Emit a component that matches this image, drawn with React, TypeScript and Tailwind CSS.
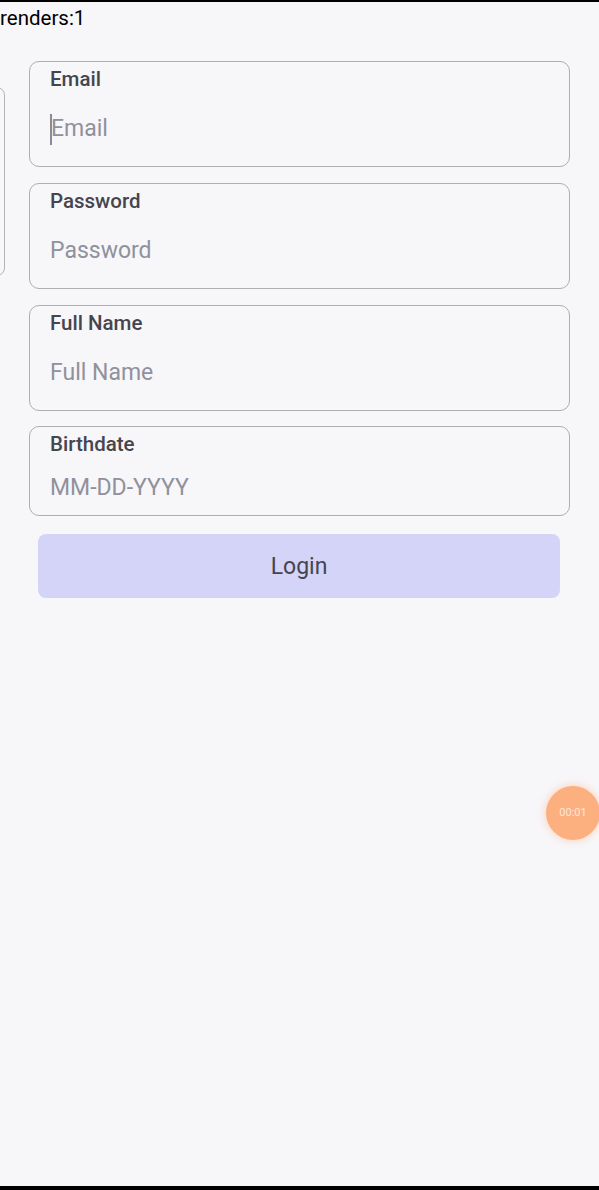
import React from 'react';

const fields = [
  { label: 'Email', placeholder: 'Email', caret: true },
  { label: 'Password', placeholder: 'Password' },
  { label: 'Full Name', placeholder: 'Full Name' },
];

function Field({ label, placeholder, caret }: { label: string; placeholder: string; caret?: boolean }) {
  return (
    <div className="h-[106px] rounded-[10px] border border-[#adadb3] pl-[20px] pt-[5px]">
      <div className="h-6 text-[20.5px] leading-6 font-medium text-[#45454d]">{label}</div>
      <div className="mt-[18px] flex h-10 items-center text-[23px] text-[#90919c]">
        {caret && <span className="-mr-[1px] h-[31px] w-[2px] bg-[#8a8b96]" />}
        <span>{placeholder}</span>
      </div>
    </div>
  );
}

export default function App() {
  return (
    <div
      className="relative flex h-[1190px] flex-col overflow-hidden bg-[#f7f6f9]"
      style={{ fontFamily: 'Roboto, "Noto Sans", sans-serif' }}
    >
      <div className="h-[2px] bg-black" />
      <div className="h-[32px] pt-[4px] text-[20.5px] leading-[24px] text-black">renders:1</div>

      <div className="mt-[27px] flex items-start">
        <div className="-ml-[300px] mt-[26px] h-[189px] w-[305px] shrink-0 rounded-[8px] border border-[#b4b4ba]" />

        <div className="ml-[24px] flex w-[541px] flex-col gap-[16px]">
          {fields.map((f) => (
            <Field key={f.label} {...f} />
          ))}

          <div className="-mt-[1px] h-[90px] rounded-[10px] border border-[#adadb3] pl-[20px] pt-[5px]">
            <div className="h-6 text-[20.5px] leading-6 font-medium text-[#45454d]">Birthdate</div>
            <div className="mt-[12px] flex h-10 items-center text-[23px] text-[#90919c]">MM-DD-YYYY</div>
          </div>

          <button className="ml-[9px] mr-[10px] mt-[2px] h-[64px] rounded-[8px] bg-[#d4d4f8] pt-[3px] text-[23px] text-[#45454f]">
            Login
          </button>
        </div>
      </div>

      <div className="absolute left-[546px] top-[786px] flex h-[54px] w-[54px] items-center justify-center rounded-full bg-[#fdb07f] shadow-[0_0_6px_2px_rgba(253,176,127,0.35)]">
        <span className="text-[11px] text-white/70">00:01</span>
      </div>

      <div className="mt-auto h-[4px] bg-black" />
    </div>
  );
}
